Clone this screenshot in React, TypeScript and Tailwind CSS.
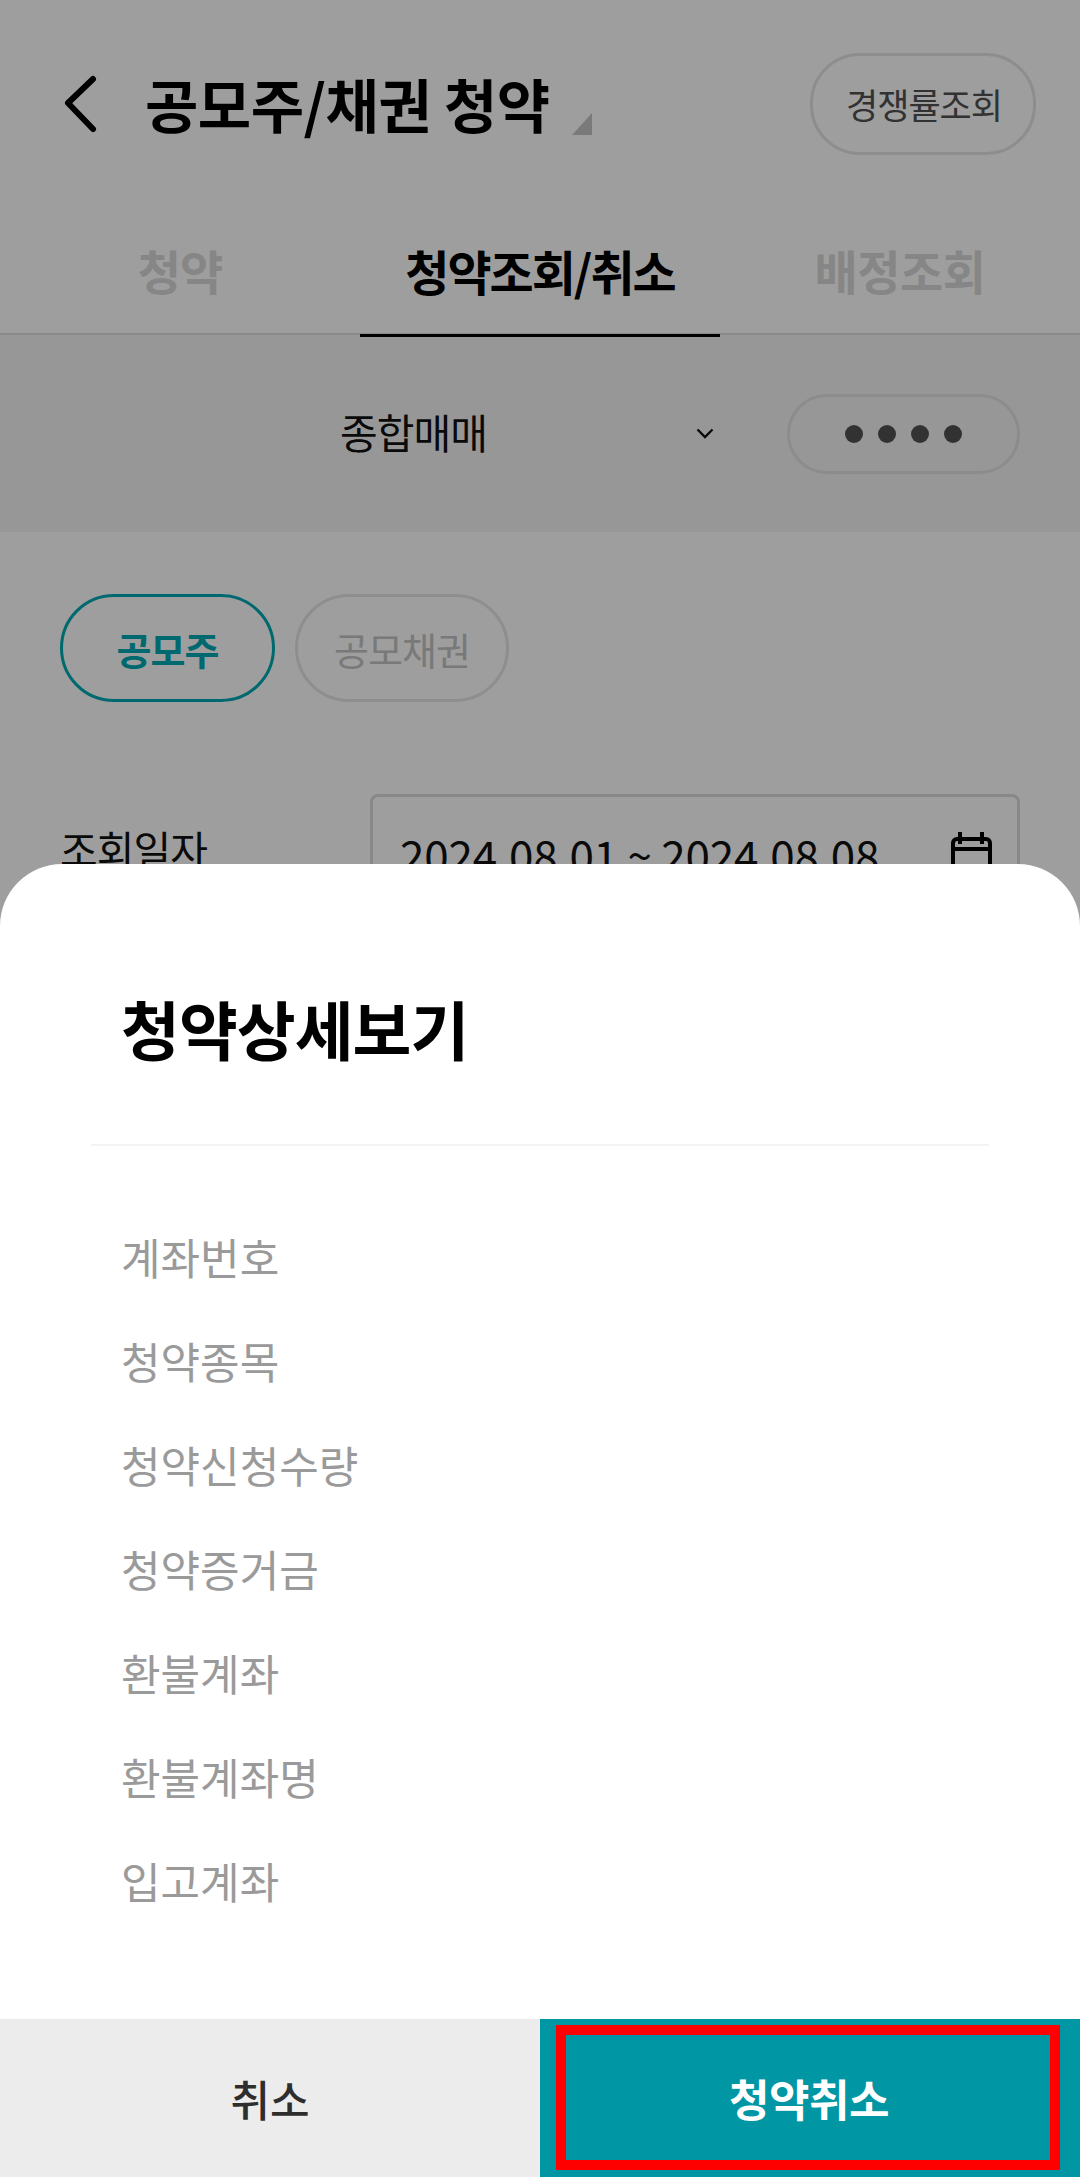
import React from 'react';

const FONT = "font-['Noto_Sans_CJK_KR','Noto_Sans',sans-serif]";

const detailRows = ['계좌번호', '청약종목', '청약신청수량', '청약증거금', '환불계좌', '환불계좌명', '입고계좌'];

const Header: React.FC = () => (
  <header className="flex h-[208px] items-center pl-[60px] pr-[44px]">
    <svg width="40" height="62" viewBox="0 0 40 62" fill="none" className="shrink-0">
      <path d="M33 6 L8 30 L33 56" stroke="#000" strokeWidth="6" strokeLinecap="round" strokeLinejoin="round" />
    </svg>
    <h1 className="mb-[2px] ml-[45px] text-[58px] leading-none font-bold tracking-[-0.5px] text-black">공모주/채권 청약</h1>
    <span className="mt-[40px] ml-[22px] h-0 w-0 border-b-[22px] border-l-[20px] border-b-[#c6c6c6] border-l-transparent" />
    <button className="ml-auto flex h-[102px] w-[226px] items-center justify-center rounded-[50px] border-[3px] border-[#e4e4e4] pl-[2px] text-[35px] tracking-[-1px] text-[#525252]">
      경쟁률조회
    </button>
  </header>
);

const Tabs: React.FC = () => (
  <nav className="relative flex h-[127px] items-start border-b-2 border-[#dedede]">
    <div className="flex h-[125px] w-[360px] items-center justify-center text-[47px] font-bold tracking-[-1px] text-[#d8d8d8]">청약</div>
    <div className="-mb-[2px] flex h-[129px] w-[360px] items-center justify-center border-b-[3px] border-black pb-[2px] text-[48px] font-bold tracking-[-2px] text-black">청약조회/취소</div>
    <div className="flex h-[125px] w-[360px] items-center justify-center text-[47px] font-bold tracking-[-0.5px] text-[#d8d8d8]">배정조회</div>
  </nav>
);

const AccountRow: React.FC = () => (
  <section className="flex h-[197px] items-center bg-[#f4f4f4] pr-[60px]">
    <span className="mb-[3px] ml-[340px] text-[41px] tracking-[-1px] text-[#111]">종합매매</span>
    <svg width="18" height="11" viewBox="0 0 18 11" fill="none" className="ml-[209px] shrink-0">
      <path d="M1.5 1.5 L9 9 L16.5 1.5" stroke="#111" strokeWidth="2.4" />
    </svg>
    <div className="ml-auto flex h-[80px] w-[233px] items-center justify-center gap-[15px] rounded-[40px] border-[3px] border-[#e2e2e2]">
      <i className="h-[18px] w-[18px] rounded-full bg-[#525252]" />
      <i className="h-[18px] w-[18px] rounded-full bg-[#525252]" />
      <i className="h-[18px] w-[18px] rounded-full bg-[#525252]" />
      <i className="h-[18px] w-[18px] rounded-full bg-[#525252]" />
    </div>
  </section>
);

const FilterChips: React.FC = () => (
  <div className="flex gap-[20px] pt-[62px] pl-[60px]">
    <button className="flex h-[108px] w-[215px] items-center justify-center rounded-[54px] border-[3px] border-[#00a9b3] text-[38px] font-bold tracking-[-1px] text-[#00a9b3]">공모주</button>
    <button className="flex h-[108px] w-[214px] items-center justify-center rounded-[54px] border-[3px] border-[#e6e6e6] text-[38px] tracking-[-1px] text-[#c4c4c4]">공모채권</button>
  </div>
);

const DateRow: React.FC = () => (
  <div className="mt-[92px] flex items-start pr-[60px] pl-[60px]">
    <span className="mt-[28px] text-[41px] leading-[52px] tracking-[-1px] text-[#111]">조회일자</span>
    <div className="ml-auto flex h-[120px] w-[650px] items-start rounded-[8px] border-[3px] border-[#dcdcdc] pt-[30px] pr-[25px] pl-[27px]">
      <span className="text-[44px] leading-[54px] tracking-[-0.2px] text-[#111]">2024.08.01 ~ 2024.08.08</span>
      <svg width="44" height="50" viewBox="0 0 44 50" fill="none" className="mt-[2px] ml-auto shrink-0">
        <rect x="5" y="10" width="37" height="38" rx="4" stroke="#000" strokeWidth="4" />
        <path d="M5 20 H42 M12 3 V15 M34 3 V15" stroke="#000" strokeWidth="4" />
      </svg>
    </div>
  </div>
);

const DetailSheet: React.FC = () => (
  <div className="absolute inset-x-0 top-[864px] bottom-0 flex flex-col rounded-t-[62px] bg-white">
    <h2 className="px-[121px] pt-[128px] text-[64px] leading-[70px] font-bold tracking-[-1px] text-black">청약상세보기</h2>
    <div className="mx-[91px] mt-[82px] border-t-2 border-[#f3f3f3]" />
    <ul className="flex flex-col gap-[52px] px-[121px] pt-[84px]">
      {detailRows.map((label) => (
        <li key={label} className="text-[43px] leading-[52px] text-[#9a9a9a]">{label}</li>
      ))}
    </ul>
    <div className="mt-auto grid h-[158px] grid-cols-2">
      <button className="flex items-center justify-center bg-[#ececec] text-[43px] font-medium text-[#2e2e2e]">취소</button>
      <div className="flex bg-[#0096a3] pt-[6px] pr-[20px] pb-[7px] pl-[16px]">
        <button className="flex flex-1 items-center justify-center border-[10px] border-[#ff0000] pl-[2px] text-[44px] font-bold tracking-[-0.5px] text-white">청약취소</button>
      </div>
    </div>
  </div>
);

export default function App() {
  return (
    <div className={`relative h-[2177px] w-[1080px] overflow-hidden bg-white ${FONT}`}>
      <Header />
      <Tabs />
      <AccountRow />
      <FilterChips />
      <DateRow />
      <div className="absolute inset-0 bg-black/38" />
      <DetailSheet />
    </div>
  );
}
